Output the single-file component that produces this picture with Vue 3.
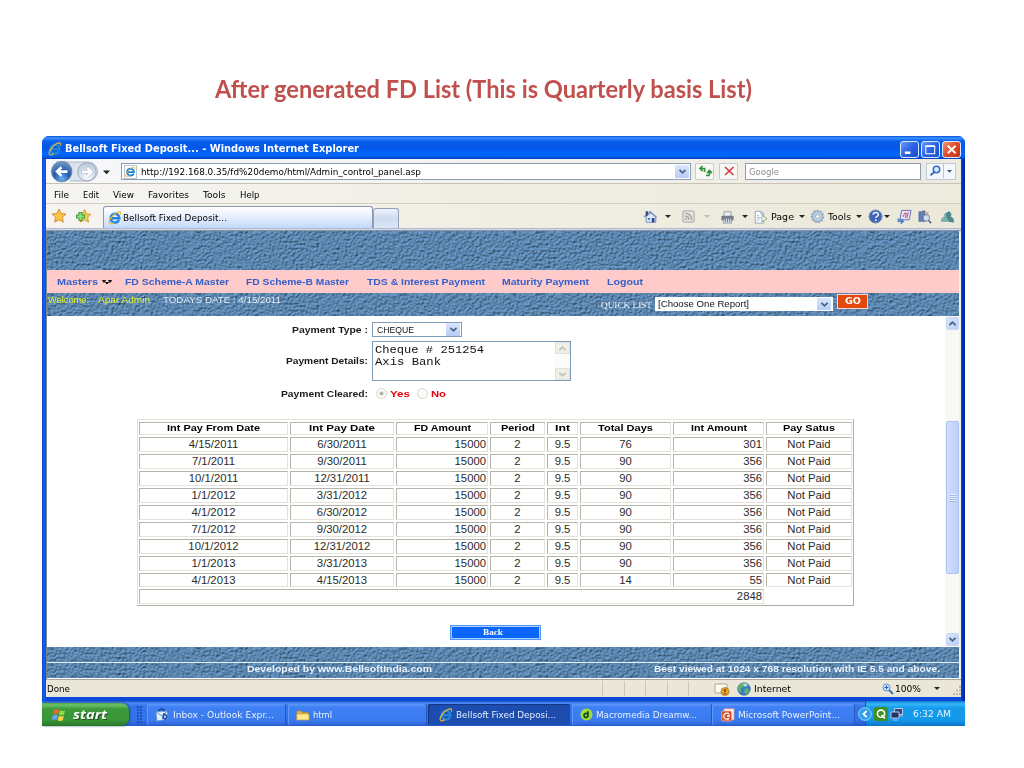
<script setup>
import { h } from 'vue'

// Stretches a text run horizontally so that it fills the given width.
const vFit = {
  mounted(el, { value }) {
    const natural = el.getBoundingClientRect().width
    el.style.width = value + 'px'
    el.style.transform = `scaleX(${value / natural})`
  },
}

const IeLogo = () =>
  h('svg', { viewBox: '0 0 16 16', width: 14, height: 14 }, [
    h('path', { d: 'M12.6 10.2A5 5 0 1 1 13 8.2H4.6', fill: 'none', stroke: '#2484d8', 'stroke-width': 2.8 }),
    h('path', { d: 'M2 14.6C-.6 12.6 4.5 4.6 10 1.8c3.6-1.8 5.2-.6 4 2.2', fill: 'none', stroke: '#e8b93a', 'stroke-width': 1.4 }),
    h('path', { d: 'M2 14.6c1.2.7 3-.1 4.6-1.5', fill: 'none', stroke: '#e8b93a', 'stroke-width': 1.3 }),
  ])

const Chevron = (props) =>
  h('svg', { viewBox: '0 0 10 8', width: 9, height: 7 }, [
    h('path', { d: props.up ? 'M1.5 5.8 5 2.4l3.5 3.4' : 'M1.5 2.2 5 5.6l3.5-3.4', fill: 'none', stroke: props.tone || '#4a6185', 'stroke-width': 2 }),
  ])
Chevron.props = { up: Boolean, tone: String }

const menus = [['File', 15], ['Edit', 16], ['View', 21], ['Favorites', 41], ['Tools', 22.5], ['Help', 19.5]]
const links = [
  ['FD Scheme-A Master', 104], ['FD Scheme-B Master', 103], ['TDS & Interest Payment', 118],
  ['Maturity Payment', 87], ['Logout', 36],
]
const heads = [
  ['Int Pay From Date', 93], ['Int Pay Date', 66], ['FD Amount', 57], ['Period', 34],
  ['Int', 15], ['Total Days', 55], ['Int Amount', 56], ['Pay Satus', 52],
]
const dates = [
  ['4/15/2011', '6/30/2011'], ['7/1/2011', '9/30/2011'], ['10/1/2011', '12/31/2011'],
  ['1/1/2012', '3/31/2012'], ['4/1/2012', '6/30/2012'], ['7/1/2012', '9/30/2012'],
  ['10/1/2012', '12/31/2012'], ['1/1/2013', '3/31/2013'], ['4/1/2013', '4/15/2013'],
]
const rows = dates.map(([from, to], i) => [
  from, to, '15000', '2', '9.5',
  i === 0 ? '76' : i === 8 ? '14' : '90',
  i === 0 ? '301' : i === 8 ? '55' : '356',
  'Not Paid',
])
</script>

<template>
  <main class="slide">
    <svg class="defs" width="0" height="0">
      <filter id="stone" x="0" y="0" width="100%" height="100%" color-interpolation-filters="sRGB">
        <feTurbulence type="fractalNoise" baseFrequency="0.38 0.44" numOctaves="2" seed="8" />
        <feDiffuseLighting surfaceScale="1.45" diffuseConstant="1.08" lighting-color="#6594c1">
          <feDistantLight azimuth="235" elevation="58" />
        </feDiffuseLighting>
      </filter>
    </svg>

    <h1><span v-fit="537">After generated FD List (This is Quarterly basis List)</span></h1>

    <section class="window">
      <header class="titlebar">
        <IeLogo />
        <b v-fit="294" class="t">Bellsoft Fixed Deposit... - Windows Internet Explorer</b>
        <div class="winbtns">
          <i class="wb"><svg viewBox="0 0 18 16"><path d="M4 11.5h6" stroke="#fff" stroke-width="2.6" /></svg></i>
          <i class="wb"><svg viewBox="0 0 18 16"><path d="M4 4.5h9.5v8H4z" fill="none" stroke="#fff" stroke-width="1.1" /><path d="M4 4.4h9.5" stroke="#fff" stroke-width="2" /></svg></i>
          <i class="wb close"><svg viewBox="0 0 18 16"><path d="m5 4 8.4 8M13.4 4 5 12" stroke="#fff" stroke-width="2" /></svg></i>
        </div>
      </header>

      <div class="nav">
        <svg class="navarrows" viewBox="46 159 72 25" width="72" height="25">
          <defs>
            <radialGradient id="gb" cx=".5" cy=".85" r=".8"><stop offset="0" stop-color="#6db4f2" /><stop offset=".5" stop-color="#2259a8" /><stop offset="1" stop-color="#6f93c8" /></radialGradient>
            <radialGradient id="gf" cx=".5" cy=".8" r=".8"><stop offset="0" stop-color="#f6f9fd" /><stop offset="1" stop-color="#b9c7da" /></radialGradient>
          </defs>
          <path d="M56 162h32a9.5 9.5 0 0 1 0 19H70" fill="#dde3ec" stroke="#9daabc" stroke-width=".8" />
          <circle cx="61.7" cy="171.6" r="10.3" fill="url(#gb)" stroke="#73849e" stroke-width=".8" />
          <circle cx="87" cy="171.8" r="9.2" fill="url(#gf)" stroke="#98a5b8" stroke-width=".9" />
          <path d="M57 171.600h10.500M61.500 167.300l-4.500 4.300 4.500 4.300" fill="none" stroke="#fff" stroke-width="2.600" />
          <path d="M81.500 171.800h10M87.500 167.800l4 4-4 4" fill="none" stroke="#a5b3c7" stroke-width="3.400" />
          <path d="M82 171.800h9.500M87.500 167.800l4 4-4 4" fill="none" stroke="#fff" stroke-width="2.500" />
          <path d="M103 170.500h7l-3.500 3.800z" fill="#222" />
        </svg>
        <div class="address">
          <span class="favicon"><IeLogo /></span>
          <span v-fit="280" class="t">http://192.168.0.35/fd%20demo/html/Admin_control_panel.asp</span>
          <i class="drop"><Chevron /></i>
        </div>
        <i class="sq"><svg viewBox="0 0 18 16" width="18" height="16"><path d="M8.500 9V5.500H4M6.500 3 4 5.500 6.500 8M10 12.500h2c1 0 1.500-.5 1.500-2V8M11 10.200l2.500-2.700 2.500 2.700" fill="none" stroke="#2e9236" stroke-width="1.700" /></svg></i>
        <i class="sq"><svg viewBox="0 0 18 16" width="18" height="16"><path d="m5 4 8.500 8M13.500 4 5 12" stroke="#d23c3c" stroke-width="1.700" /></svg></i>
        <div class="search"><span v-fit="30" class="t">Google</span></div>
        <i class="find">
          <svg viewBox="0 0 30 16" width="30" height="16"><circle cx="10.500" cy="6.500" r="3.200" fill="#d8ecff" stroke="#3b6bc0" stroke-width="1.500" /><path d="m8 9.200-3.500 3" stroke="#3b6bc0" stroke-width="2" /><path d="M17.500 1v14" stroke="#b8c4d8" /><path d="M21 7h5l-2.500 2.800z" fill="#34558a" /></svg>
        </i>
      </div>

      <div class="menubar">
        <span v-for="m in menus" :key="m[0]" v-fit="m[1]" class="t">{{ m[0] }}</span>
      </div>

      <div class="tabs">
        <svg class="stars" viewBox="46 203 56 26" width="56" height="26">
          <path d="m59 208 2.100 4.500 4.900.5-3.700 3.300 1.100 4.900-4.400-2.500-4.400 2.500 1.100-4.900-3.700-3.300 4.900-.5z" fill="#fbc344" stroke="#d8862a" stroke-width=".9" />
          <path d="m84.500 208.500 2 4.300 4.500.5-3.400 3.200 1 4.700-4.100-2.400-4.100 2.400 1-4.700-3.400-3.200 4.500-.5z" fill="#f6ca4e" stroke="#d8932a" stroke-width=".9" />
          <path d="M76 215.500h9M80.500 211v9" stroke="#3f9a44" stroke-width="4" /><path d="M77 215.500h7M80.500 212v7" stroke="#8ee277" stroke-width="2.200" />
        </svg>
        <div class="tab"><IeLogo /><span v-fit="104" class="t">Bellsoft Fixed Deposit...</span></div>
        <div class="newtab"></div>
        <div class="tools">
          <svg viewBox="0 0 16 16" width="15" height="14"><path d="M3 7.500V14h11V7.500L8.500 3z" fill="#dfe7f6" stroke="#7182ae" /><path d="M.8 8 7.500 2 15 8.500" fill="none" stroke="#7f90c0" stroke-width="1.700" /><path d="M2.500 1.500h2.500v4l-2.500 2z" fill="#303f8c" /><path d="M9.500 9h3v5h-3z" fill="#27468f" /><path d="M5 9h2.500v2H5z" fill="#3d7e90" /></svg>
          <i class="caret c1"></i>
          <svg class="i2" viewBox="0 0 14 14" width="13" height="13"><rect x="1" y="1" width="12" height="12" rx="1" fill="#e2e2df" stroke="#a2a29e" /><path d="M3.500 6.500a4 4 0 0 1 4 4M3.500 3.500a7 7 0 0 1 7 7" fill="none" stroke="#989894" stroke-width="1.300" /><circle cx="4.300" cy="9.700" r="1" fill="#989894" /></svg>
          <i class="caret c2 faint"></i>
          <svg class="i3" viewBox="0 0 16 16" width="15" height="14"><path d="M4 7V2h8v5" fill="#eceff4" stroke="#8d939e" /><rect x="1" y="6.500" width="14" height="5.500" rx="1" fill="#777d89" /><path d="M4 10h8l1 5H3z" fill="#d8dde5" stroke="#808792" stroke-width=".7" /><path d="M5.500 10v4M8 10v4M10.500 10v4" stroke="#697389" /></svg>
          <i class="caret c3"></i>
          <svg class="i4" viewBox="0 0 16 16" width="14" height="14"><path d="M1.500 1.500H8l3 3V15H1.500z" fill="#fbfcff" stroke="#909eb7" /><path d="M8 1.500v3h3" fill="#cdd7e7" stroke="#909eb7" /><path d="M3.500 6.500h2M3.500 9h4M3.500 11.500h2" stroke="#71a1c1" /><path d="m9 6 6 4-6 3.500z" fill="#edf5e5" stroke="#90a885" /></svg>
          <span v-fit="23" class="t x1">Page</span>
          <i class="caret c4"></i>
          <svg class="i5" viewBox="0 0 16 16" width="15" height="15"><circle cx="8" cy="8" r="5.800" fill="#c8d7e5" stroke="#9db1c3" stroke-width="2.800" stroke-dasharray="2.400 .8" /><circle cx="8" cy="8" r="5" fill="#c6d8e8" stroke="#8ca6bc" /><circle cx="8" cy="8" r="2.200" fill="#f5f7f5" stroke="#8ea5b8" /></svg>
          <span v-fit="23" class="t x2">Tools</span>
          <i class="caret c4"></i>
          <svg class="i6" viewBox="0 0 16 16" width="15" height="15"><circle cx="8" cy="8" r="7" fill="#3f66b4" stroke="#8496ba" /><path d="M5.500 6c0-3 5.500-3 5.500 0 0 2-2.700 1.700-2.700 3.700M8.300 11v1.800" fill="none" stroke="#e8f0ff" stroke-width="1.700" /></svg>
          <i class="caret c5"></i>
          <svg class="i7" viewBox="0 0 16 16" width="15" height="15"><path d="M5 1.500h10l-2 10H3z" fill="#eee5f4" stroke="#6b67b4" /><path d="M6.500 8.500 8 4.500h2l-1 5M12 3.500l-1.500 6" fill="none" stroke="#a44d7a" /><path d="M1.500 10v3h5M4 10.500 6.500 13 4 15.500" fill="none" stroke="#4b83d6" stroke-width="1.800" /></svg>
          <svg class="i8" viewBox="0 0 16 16" width="14" height="14"><path d="M1 2h3v11H1zM5 1h3v12H5z" fill="#6483b8" stroke="#4a5c95" stroke-width=".7" /><path d="M9 2h3v5H9z" fill="#d5b77e" /><circle cx="9.500" cy="9" r="3.700" fill="#cddff0" stroke="#6577a0" /><path d="m12 12 3 3" stroke="#54637f" stroke-width="1.800" /></svg>
          <svg class="i9" viewBox="0 0 16 16" width="15" height="14"><path d="M1 13c0-4 2-5 4-5-2-5 3-6 4-2l-1 3 3 4z" fill="#7db5ac" stroke="#5c9790" stroke-width=".6" /><path d="M7 7c-1-5 4-7 5-2 0 2-1 2-1 3 3 0 4 2 4 6l-5-1z" fill="#4a8b92" stroke="#38717c" stroke-width=".6" /></svg>
        </div>
      </div>

      <div class="page">
        <div class="stone banner"><svg class="tex"><rect width="100%" height="100%" filter="url(#stone)" /></svg></div>
        <nav class="pink">
          <b v-fit="41">Masters</b>
          <svg class="updown" viewBox="0 0 10 6" width="10" height="6"><path d="M.5 1.500h3L2 3.500zM3.500 3.500h3L5 5zM6.500 1.500h3L8 3.500z" fill="#101010" stroke="#101010" /></svg>
          <b v-for="l in links" :key="l[0]" v-fit="l[1]" class="link">{{ l[0] }}</b>
        </nav>
        <div class="stone welcome">
          <svg class="tex"><rect width="100%" height="100%" filter="url(#stone)" /></svg>
          <span v-fit="41" class="w yellow">Welcome:</span>
          <span v-fit="52" class="w yellow apar">Apar Admin</span>
          <span v-fit="118" class="w today">TODAYS DATE : 4/15/2011</span>
          <span v-fit="51" class="quick">QUICK LIST</span>
          <div class="select report"><span v-fit="91">[Choose One Report]</span><i class="drop"><Chevron /></i></div>
          <button class="go"><span v-fit="16">GO</span></button>
        </div>

        <div class="content">
          <div class="body">
            <div class="form">
              <b v-fit="76">Payment Type :</b>
              <div class="select paytype"><span v-fit="37">CHEQUE</span><i class="drop"><Chevron /></i></div>
              <b v-fit="82">Payment Details:</b>
              <div class="textarea">
                <div class="lines"><span v-fit="109">Cheque # 251254</span><span v-fit="66">Axis Bank</span></div>
                <div class="mini"><i><Chevron up tone="#c3c2b8" /></i><i><Chevron tone="#c3c2b8" /></i></div>
              </div>
              <b v-fit="87">Payment Cleared:</b>
              <div class="radios"><i class="radio on"></i><b v-fit="20">Yes</b><i class="radio off"></i><b v-fit="15">No</b></div>
            </div>

            <div class="grid">
              <div v-for="c in heads" :key="c[0]" class="cell head"><b v-fit="c[1]">{{ c[0] }}</b></div>
              <template v-for="(r, i) in rows" :key="i">
                <div v-for="(v, j) in r" :key="j" class="cell" :class="{ num: j === 2 || j === 6 }">{{ v }}</div>
              </template>
              <div class="cell num total">2848</div>
            </div>

            <button class="back"><span v-fit="20">Back</span></button>
          </div>
          <div class="scroll">
            <i class="sb"><Chevron up /></i>
            <div class="thumb"><i></i></div>
            <i class="sb"><Chevron /></i>
          </div>
        </div>

        <div class="stone foot1"><svg class="tex"><rect width="100%" height="100%" filter="url(#stone)" /></svg></div>
        <div class="stone foot2">
          <svg class="tex"><rect width="100%" height="100%" filter="url(#stone)" /></svg>
          <b v-fit="185">Developed by www.BellsoftIndia.com</b>
          <b v-fit="286">Best viewed at 1024 x 768 resolution with IE 5.5 and above.</b>
        </div>
      </div>

      <div class="status">
        <span v-fit="23" class="t">Done</span>
        <div class="seps"><i v-for="n in 5" :key="n"></i></div>
        <svg class="warn" viewBox="0 0 16 14" width="16" height="14"><path d="M1 2h12v9H1z" fill="#fffdf3" stroke="#ada591" /><circle cx="11" cy="9.500" r="4" fill="#eaa22b" stroke="#a66b16" stroke-width=".7" /><path d="M11 7v3M11 11v1.300" stroke="#5c2e08" stroke-width="1.300" /></svg>
        <svg class="globe" viewBox="0 0 14 14" width="14" height="14"><circle cx="7" cy="7" r="6.300" fill="#397cc7" stroke="#3a6a80" stroke-width=".6" /><path d="M2 3c3-4 7-1 5 1S3 6 4 8s-1 3-2 1-1-4 0-6M8 7c2-1 4 0 4 1s-1 4-3 4-2-3-1-5" fill="#62b667" /><path d="M6 2c2-1 4 0 5 1L8 5z" fill="#b4e6ca" /></svg>
        <span v-fit="37" class="t">Internet</span>
        <svg class="zoomi" viewBox="0 0 12 12" width="12" height="12"><circle cx="4.500" cy="4.500" r="3.500" fill="#d7edff" stroke="#6291cd" /><path d="M2.500 4.500h4M4.500 2.500v4" stroke="#225fbc" stroke-width="1.200" /><path d="m7 7 4 4" stroke="#4774a9" stroke-width="2" /></svg>
        <span v-fit="26" class="t">100%</span>
        <i class="caret zc"></i>
        <svg class="grip" viewBox="0 0 10 10" width="10" height="10"><path d="M7 1h2M4 4.500h2M7 4.500h2M1 8h2M4 8h2M7 8h2" stroke="#bdb8a5" stroke-width="2" /></svg>
      </div>
    </section>

    <footer class="taskbar">
      <div class="start">
        <svg viewBox="0 0 16 14" width="16" height="14"><path d="M3 2c2-1 3-1 5 0L7 6.500c-2-1-3-1-5 0z" fill="#ee6530" /><path d="M9 2.300c2 1 3 1 5 0L13 6.800c-2 1-3 1-5 0z" fill="#8cdd44" /><path d="M1.800 7.500c2-1 3-1 5 0L5.700 12c-2-1-3-1-5 0z" fill="#6ba4f5" /><path d="M7.800 7.800c2 1 3 1 5 0l-1 4.500c-2 1-3 1-5 0z" fill="#f8d643" /></svg>
        <span v-fit="34">start</span>
      </div>
      <i class="dots"></i>
      <div class="task k1">
        <svg viewBox="0 0 14 14" width="14" height="14"><path d="m1 4 11-1 1 8-11 2z" fill="#e2effb" stroke="#7095c5" stroke-width=".8" /><path d="m1 4 6 4 5-5" fill="none" stroke="#6e92bf" /><path d="M3 2.500 7 .8l3 2M9 6a3 3 0 0 1 2 5l-3-1z" fill="none" stroke="#1751a5" stroke-width="1.700" /></svg>
        <span v-fit="101" class="t">Inbox - Outlook Expr...</span>
      </div>
      <div class="task k2">
        <svg viewBox="0 0 14 12" width="14" height="12"><path d="M1 11V2h4l1 1.500h6V5" fill="#e5b842" stroke="#b38725" stroke-width=".7" /><path d="M.8 11V5H13v6z" fill="#fde993" stroke="#ca9e30" stroke-width=".7" /></svg>
        <span v-fit="19" class="t">html</span>
      </div>
      <div class="task k3"><IeLogo /><span v-fit="100" class="t">Bellsoft Fixed Deposi...</span></div>
      <div class="task k4">
        <svg viewBox="0 0 14 14" width="13" height="13"><circle cx="7" cy="7" r="6.500" fill="#a1dc3a" /><path d="M8.500 3.500V9.800M8.500 7a2.200 2.200 0 1 0 0 2" fill="none" stroke="#184f20" stroke-width="2" /></svg>
        <span v-fit="101" class="t">Macromedia Dreamw...</span>
      </div>
      <div class="task k5">
        <svg viewBox="0 0 14 14" width="14" height="14"><rect x="3" y=".8" width="10" height="11" fill="#fff0e8" stroke="#e69a7e" stroke-width=".7" /><rect x=".7" y="3" width="10" height="10" rx="1.500" fill="#da4c2b" stroke="#f3bca8" stroke-width=".7" /><path d="M8 6.200a3 3 0 1 0 0 4M6 8h3" fill="none" stroke="#fff" stroke-width="1.300" /></svg>
        <span v-fit="102" class="t">Microsoft PowerPoint...</span>
      </div>
      <div class="tray">
        <svg class="chev" viewBox="0 0 14 14" width="14" height="14"><circle cx="7" cy="7" r="6.300" fill="#2f9fe8" stroke="#a8dcfa" stroke-width=".9" /><path d="M8.700 3.800 5.300 7l3.400 3.200" fill="none" stroke="#fff" stroke-width="1.800" /></svg>
        <svg viewBox="0 0 14 14" width="14" height="14"><rect width="14" height="14" rx="2" fill="#3d8f22" /><circle cx="7" cy="6.700" r="3.600" fill="none" stroke="#fff" stroke-width="1.600" /><path d="m7.500 8 3.500 3.500" stroke="#fff" stroke-width="1.500" /></svg>
        <svg viewBox="0 0 14 14" width="14" height="14"><path d="M4.500 1.500h8v6h-8z" fill="#304585" stroke="#c9d8ee" stroke-width=".9" /><path d="M1 5h8v6H1z" fill="#263061" stroke="#ccd4e9" stroke-width=".9" /><path d="M3 13h5M10 9h3" stroke="#a9bce0" stroke-width="1.200" /></svg>
        <span v-fit="38" class="t">6:32 AM</span>
      </div>
    </footer>
  </main>
</template>

<style>
html, body { background: #fff; overflow: hidden; }
</style>

<style scoped>
* { box-sizing: border-box; }
.slide { width: 1024px; height: 768px; padding: 0 59px 0 42px; background: #fff; font-family: "Liberation Sans", Arial, sans-serif; overflow: hidden; display: flex; flex-direction: column; }
span, b { white-space: nowrap; }
svg { display: block; flex: none; }
i { font-style: normal; flex: none; }
.defs { position: absolute; }
[class] > span, [class] > b, h1 > span { display: inline-block; transform-origin: 0 50%; flex: none; text-align: left; }
.t { font-family: "DejaVu Sans", Tahoma, sans-serif; font-size: 9px; line-height: 12px; }
h1 { margin: 0; height: 136px; padding: 74px 0 0 173px; font: 700 24px/30px Lato, Calibri, sans-serif; color: #c0504d; }

.window { flex: none; height: 565px; width: 923px; border-radius: 7px 7px 0 0; display: flex; flex-direction: column; overflow: hidden; padding: 0 4px 4px; background: linear-gradient(90deg, #0a3fc9 0, #1962f4 2px, #0a48d8 4px, #0a48d8 919px, #0030b8 921px, #001d9c 923px); }
.titlebar { height: 23px; flex: none; margin: 0 -4px; padding: 3px 4px 0 6px; display: flex; align-items: center; background: linear-gradient(#0a4fd8 0, #3c93ff 2px, #0a61ec 5px, #0456e6 11px, #0365fb 18px, #0362f5 20px, #0040c0 23px); }
.titlebar .t { color: #fff; margin-left: 3px; font-size: 9.7px; }
.winbtns { margin-left: auto; display: flex; gap: 2px; }
.wb { width: 19px; height: 17px; border: 1px solid #dce8ff; border-radius: 3px; background: linear-gradient(135deg, #6b9bfa, #2b62e4 50%, #1c4dc8); }
.wb svg { width: 17px; height: 15px; }
.wb.close { background: linear-gradient(135deg, #f29878, #dd4b26 50%, #bf3312); }

.nav { height: 25px; flex: none; display: flex; align-items: center; background: linear-gradient(90deg, #f7f8fb, #f3f2ee 45%, #edeade); border-bottom: 1px solid #c6c3b7; }
.address { margin: 1px 0 0 3px; width: 570px; height: 17px; border: 1px solid #8c9cb4; background: #fff; display: flex; align-items: center; padding: 0 1px 0 2px; }
.favicon { width: 13px; height: 14px; border: 1px solid #bcc4d0; }
.favicon svg { width: 11px; height: 12px; }
.address .t { margin-left: 4px; }
.drop { display: flex; align-items: center; justify-content: center; width: 14px; height: 13px; margin-left: auto; background: linear-gradient(#dbe7fd, #b6cbf5); border-radius: 1px; }
.sq { width: 19px; height: 17px; margin-left: 4px; border: 1px solid #c8cbd2; background: #f8f8f6; border-radius: 1px; display: flex; justify-content: center; align-items: center; }
.sq + .sq { margin-left: 5px; }
.search { width: 176px; height: 17px; margin: 1px 0 0 7px; border: 1px solid #8c9cb4; background: #fff; padding: 2px 3px; display: flex; }
.search .t { color: #8e8e8e; }
.find { margin-left: 5px; width: 30px; height: 17px; border: 1px solid #bdc8da; background: #f4f7fc; display: flex; justify-content: center; align-items: center; }

.menubar { height: 20px; flex: none; display: flex; align-items: center; gap: 14px; padding: 2px 0 0 8px; background: linear-gradient(90deg, #f6f5f2, #f0eee4 45%, #edeade); border-bottom: 1px solid #d2cfc3; }
.tabs { height: 27px; flex: none; display: flex; align-items: flex-start; background: linear-gradient(90deg, #f5f4f1, #f1efe5 45%, #ebe8d8); border-bottom: 1px solid #8b929c; box-shadow: inset 0 -1px #d3ddee, inset 0 -2px #a9b9d4; }
.tab { margin: 2px 0 0 1px; width: 270px; height: 22px; border: 1px solid #8a98b0; border-bottom: 0; border-radius: 3px 3px 0 0; background: linear-gradient(#fff, #eaf1fe 40%, #c4d8fa); display: flex; align-items: center; padding-left: 4px; }
.tab .t { margin-left: 1px; }
.newtab { margin-top: 4px; width: 26px; height: 20px; border: 1px solid #95a1ba; border-bottom: 0; border-radius: 3px 3px 0 0; background: linear-gradient(#eff3fc, #cfdaf1 50%, #dee6f6); }
.tools { margin-left: 244px; height: 25px; display: flex; align-items: center; }
.caret { width: 0; height: 0; border: 3px solid transparent; border-top: 3px solid #222; border-bottom: 0; }
.faint { border-top-color: #bbb; }
.c1 { margin-left: 7px; } .i2 { margin-left: 11px; } .c2 { margin-left: 9px; } .i3 { margin-left: 10px; } .c3 { margin-left: 7px; } .i4 { margin-left: 6px; }
.x1 { margin-left: 3px; } .c4 { margin-left: 5px; } .i5 { margin-left: 5px; } .x2 { margin-left: 3px; } .i6 { margin-left: 6px; } .c5 { margin-left: 1px; }
.i7 { margin-left: 7px; } .i8 { margin-left: 6px; } .i9 { margin-left: 8px; }

.page { flex: none; height: 448px; margin-right: 2px; border-left: 1px solid #7c8798; display: flex; flex-direction: column; background: #fff; box-shadow: 2px 0 #f3f1e8; }
.stone { position: relative; background: #517da7; flex: none; overflow: hidden; display: flex; }
.tex { position: absolute; inset: 0; width: 100%; height: 100%; }
.stone > :not(.tex) { position: relative; }
.banner { height: 39px; }
.pink { height: 23px; flex: none; background: #ffcaca; display: flex; align-items: center; padding-left: 10px; font-size: 9.6px; line-height: 12px; color: #3460c8; }
.updown { margin: 1px -5px 0 4px; }
.pink .link { margin-left: 17.5px; }
.welcome { height: 23px; align-items: flex-start; }
.w { margin-top: 1.5px; font-size: 9.3px; line-height: 11px; color: #e5eef8; }
.w.yellow { color: #e5f529; margin-left: 1px; }
.w.yellow.apar { margin-left: 9px; }
.w.today { margin-left: 13px; }
.quick { margin: 7px 0 0 320px; color: #e9f1f9; font: 8.7px/11px "Liberation Serif", serif; }
.select { display: flex; align-items: center; background: #fff; border: 1px solid #7f9db9; line-height: 12px; color: #111; padding: 0 1px 0 4px; }
.select > span { font-size: 9.9px; }
.report { margin: 4px 0 0 3px; width: 178px; height: 14px; border-color: #fff; padding-left: 2px; }
.report .drop { height: 12px; }
.go { margin: 1px 0 0 4px; padding: 0; width: 31px; height: 15px; border: 1px solid #f3d9cd; background: #e4480c; color: #fff; font: 900 8.8px/13px "DejaVu Sans", sans-serif; display: flex; justify-content: center; }

.content { height: 331px; flex: none; display: flex; }
.body { width: 898px; display: flex; flex-direction: column; }
.form { margin-top: 6px; display: grid; grid-template-columns: 321px 1fr; grid-template-rows: 15px 40px 18px; row-gap: 4px; column-gap: 4px; align-items: center; font-size: 9.6px; line-height: 12px; }
.form > b { justify-self: end; color: #1a1a1a; }
.paytype { width: 90px; height: 15px; }
.textarea { width: 199px; height: 40px; border: 1px solid #7f9db9; display: flex; justify-content: space-between; }
.lines { display: flex; flex-direction: column; align-items: flex-start; padding: 1.500px 0 0 1.500px; font: 10.6px/12.400px "Liberation Mono", monospace; color: #111; }
.mini { width: 15px; background: #fbfbf8; display: flex; flex-direction: column; justify-content: space-between; }
.mini i { height: 12px; display: flex; align-items: center; justify-content: center; background: #efeee7; border: 1px solid #e2e1d6; }
.radios { display: flex; align-items: center; color: #e3000f; }
.radio { width: 11px; height: 11px; border: 1px solid #d9d8ce; border-radius: 50%; background: #fbfbf8; display: flex; margin: -1px 0 0 4px; }
.on { background: radial-gradient(circle, #b5b4a8 0 1.500px, #fbfbf8 2.400px); }
.radios b { margin-left: 3px; font-size: 9.8px; }
.radios .off { margin-left: 7px; }

.grid { flex: none; align-self: flex-start; margin: 16px 0 0 90px; width: 717px; height: 187px; padding: 2px 1px 1px; border: 1px solid #e3e1d8; border-right-color: #adaca3; border-bottom-color: #adaca3; display: grid; grid-template-columns: 149px 104px 92px 55px 31px 91px 91px 86px; grid-template-rows: 13px; grid-auto-rows: 14.95px; gap: 2px; font-size: 11.3px; color: #2b2b2b; }
.cell { border: 1px solid; border-color: #b6b5ab #e4e2d9 #e4e2d9 #b6b5ab; text-align: center; line-height: 13px; white-space: nowrap; }
.head { font-size: 9.8px; line-height: 10px; color: #000; }
.num { text-align: right; padding-right: 1px; }
.total { grid-column: 1 / 8; }
.back { margin: 19px 0 0 403px; padding: 0; width: 91px; height: 15px; border: 1px solid #4e9bf5; box-shadow: inset 0 0 0 1px #a9d0fb; background: #0b67fb; color: #fff; font: 700 9px/12px "Liberation Serif", serif; display: flex; justify-content: center; padding-right: 5px; }

.scroll { width: 14px; background: #f8f8f4; display: flex; flex-direction: column; padding: 1px 0 1px 1px; }
.sb { height: 13px; background: linear-gradient(135deg, #dbe6fd, #b9cdf8); border: 1px solid #c9d7f5; border-radius: 2px; display: flex; align-items: center; justify-content: center; }
.thumb { margin: 91px 0 auto; height: 153px; border: 1px solid #adc2ee; border-radius: 2px; background: linear-gradient(90deg, #d0defd, #bed0f9); display: flex; align-items: center; justify-content: center; }
.thumb i { width: 6px; height: 8px; background: repeating-linear-gradient(#edf3fe 0 1px, #9eb5e6 1px 2px); }
.foot1 { height: 16px; }
.foot1::after { content: ""; position: relative; align-self: flex-end; width: 100%; height: 1px; background: #e4f0f8; }
.foot2 { height: 15px; align-items: center; padding-left: 200px; font-size: 9.5px; line-height: 12px; color: #eaf3fb; }
.foot2 b { top: -2px; }
.foot2 b + b { margin-left: 222px; }
.status { flex: none; height: 18px; background: #ebe7d8; border-top: 1px solid #a5a69f; display: flex; align-items: center; padding-left: 1px; }
.seps { display: flex; gap: 20.5px; margin-left: 532px; }
.seps i { width: 1px; height: 15px; background: #cbc7b6; }
.warn { margin-left: 25px; } .globe { margin: 0 3px 0 7px; } .zoomi { margin: 0 1px 0 91px; } .zc { margin-left: 13px; } .grip { margin: 4px 0 0 12px; }

.taskbar { flex: none; width: 923px; height: 25px; padding-top: 2px; background: linear-gradient(#1e4fc4 0, #4a8cf5 2px, #3575ec 5px, #3372ea 19px, #2558c8 25px); display: flex; align-items: stretch; color: #fff; }
.start { width: 87px; border-radius: 0 8px 8px 0; background: linear-gradient(#4fa84c 0, #6cc168 2px, #3c9a3a 6px, #3a9638 17px, #277726 23px); box-shadow: 1px 0 2px #1b4a7a; display: flex; align-items: center; padding-left: 9px; }
.start span { margin-left: 6px; font: italic 700 13px/16px "Open Sans", "Noto Sans", sans-serif; text-shadow: 1px 1px 1px #1d4d1a; padding-bottom: 1px; }
.dots { margin: 3px 0 3px 8px; width: 6px; background: radial-gradient(circle at 1px 1px, #1e4fc0 0.8px, transparent 1.2px) 0 0 / 3px 3px; }
.task { margin: 1px 0 1px; height: 21px; border-radius: 2px; background: linear-gradient(#6099fb 0, #3f80f5 3px, #3a79ee 17px, #2d66d5); box-shadow: inset 1px 0 #5f99fb, inset -1px 0 #2759bd; display: flex; align-items: center; }
.task .t { color: #e7f0ff; margin-left: 4px; }
.k1 { margin-left: 4px; width: 139px; padding-left: 8px; }
.k2 { margin-left: 2px; width: 139px; padding-left: 8px; }
.k2 .t { margin-left: 3px; }
.k3 { margin-left: 1px; width: 142px; padding-left: 11px; background: #1c4cae; box-shadow: inset 1px 1px #123684; }
.k3 .t { margin-left: 3px; }
.k4 { margin-left: 2px; width: 140px; padding-left: 8px; }
.k4 .t { margin-left: 3px; }
.k5 { width: 143px; padding-left: 9px; }
.k5 .t { margin-left: 3px; }
.tray { margin: -2px 0 0 10px; flex: 1; background: linear-gradient(#1277ce 0, #36b7f8 3px, #159aec 7px, #1398ea 19px, #0e74c4); display: flex; align-items: center; gap: 2px; border-left: 1px solid #0d5fae; }
.chev { margin-left: -8px; }
.tray .t { margin-left: 7px; color: #e8f6ff; }
</style>
